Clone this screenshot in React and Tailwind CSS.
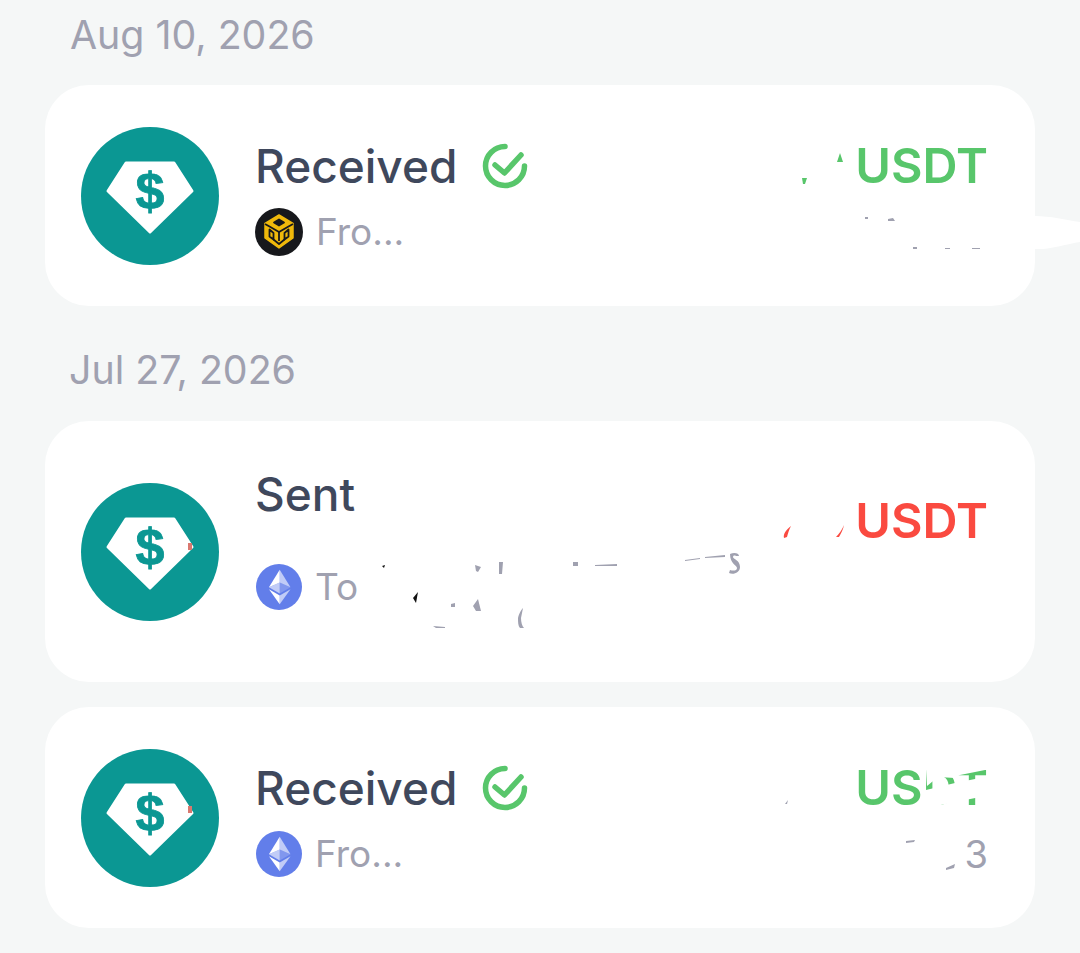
const Logo = () => (
  <svg width="138" height="138" viewBox="0 0 138 138" className="shrink-0">
    <circle cx="69" cy="69" r="69" fill="#0b9793" />
    <path d="M45 36H93L111 64L69 105L27 64Z" fill="#fff" stroke="#fff" strokeWidth="3" strokeLinejoin="round" />
    <text x="69" y="82" textAnchor="middle" fontFamily="'Liberation Sans', sans-serif" fontWeight="700" fontSize="52" stroke="#0b9793" strokeWidth="0.8" fill="#0b9793">$</text>
  </svg>
);

const Check = () => (
  <svg width="46" height="46" viewBox="0 0 46 46" className="shrink-0">
    <path d="M23 3.5A19.5 19.5 0 1 0 42.5 23" fill="none" stroke="#58c66b" strokeWidth="5.5" strokeLinecap="round" />
    <path d="M13 22L22.5 30L39 12" fill="none" stroke="#58c66b" strokeWidth="5.5" strokeLinecap="round" strokeLinejoin="round" />
  </svg>
);

const Bnb = () => (
  <svg width="48" height="48" viewBox="0 0 48 48" className="shrink-0">
    <circle cx="24" cy="24" r="24" fill="#17181c" />
    <path d="M24 7L38 15.5V30L24 40L10 30V15.5Z" fill="#f0b90b" stroke="#f0b90b" strokeWidth="1.5" strokeLinejoin="round" />
    <g fill="none" stroke="#17181c" strokeWidth="1.8" strokeLinejoin="round">
      <path d="M24 11.5L29 14.5L24 17.5L19 14.5Z" fill="#17181c" />
      <path d="M10 16L14.5 18.5L24 24L33.5 18.5L38 16" />
      <path d="M24 24V33" />
      <path d="M14.5 21.5V28.5L18.5 31.5V25Z" />
      <path d="M33.5 21.5V28.5L29.5 31.5V25Z" />
      <path d="M18.5 31.5L24 36L29.5 31.5" />
    </g>
  </svg>
);

const Eth = () => (
  <svg width="46" height="46" viewBox="0 0 32 32" className="ml-px shrink-0">
    <circle cx="16" cy="16" r="16" fill="#627eea" />
    <g fill="#fff">
      <path fillOpacity=".602" d="M16.498 4v8.87l7.497 3.35z" />
      <path d="M16.498 4L9 16.22l7.498-3.35z" />
      <path fillOpacity=".602" d="M16.498 21.968v6.027L24 17.616z" />
      <path d="M16.498 27.995v-6.028L9 17.616z" />
      <path fillOpacity=".2" d="M16.498 20.573l7.497-4.353-7.497-3.348z" />
      <path fillOpacity=".602" d="M9 16.22l7.498 4.353v-7.701z" />
    </g>
  </svg>
);

const Card = ({ title, check, icon, sub, color, end, tall }) => (
  <div className={`flex items-center rounded-[44px] bg-white pl-[36px] pr-[47px] ${tall ? "h-[261px]" : "h-[221px]"}`}>
    <Logo />
    <div className={`ml-[36px] flex flex-col ${tall ? "mt-[8px]" : ""}`}>
      <div className={`flex items-center gap-[25px] h-[50px] text-[46px] font-medium text-[#3f485c] ${tall ? "mb-[42px]" : "mb-[16px] mt-[7px]"}`}>
        <span>{title}</span>
        {check && <Check />}
      </div>
      <div className={`flex items-center gap-[13px] h-[50px] text-[37px] text-[#a0a1b0] ${tall ? "mb-[30px]" : ""}`}>
        {icon}
        <span>{sub}</span>
      </div>
    </div>
    <div className={`ml-auto flex flex-col items-end ${tall ? "mb-[-4px]" : "mt-[7px]"}`}>
      <div className="h-[50px] text-[48.5px] font-semibold leading-[50px]" style={{ color }}>USDT</div>
      <div className="mt-[16px] h-[50px] text-[38px] leading-[50px] text-[#a0a1b0]">{end}</div>
    </div>
  </div>
);

export default function App() {
  return (
    <div className="relative h-[953px] w-[1080px] overflow-hidden bg-[#f5f7f7] px-[45px] font-['Inter',sans-serif]">
      <div className="flex h-[85px] items-center pb-[15px] pl-[25px] text-[39.3px] text-[#a0a1b0]">Aug 10, 2026</div>
      <Card title="Received" check icon={<Bnb />} sub="Fro..." color="#58c66b" end={"\u00a0"} />
      <div className="flex h-[115px] items-center pl-[24px] pt-[14px] text-[39.3px] text-[#a0a1b0]">Jul 27, 2026</div>
      <Card title="Sent" icon={<Eth />} sub="To" color="#fa4a40" end={"\u00a0"} tall />
      <div className="h-[25px]" />
      <Card title="Received" check icon={<Eth />} sub="Fro..." color="#58c66b" end="3" />
      <svg className="absolute left-0 top-0" width="1080" height="953" viewBox="0 0 1080 953">
        <path d="M1035 216C1050 216 1066 220 1080 222V242C1066 244 1050 250 1035 249Z" fill="#fff" />
        <path d="M925 752H990V769L960 775L955 778L938 777L927 786Z" fill="#fff" />
        <path d="M926 790L955 783L990 776V795L926 808Z" fill="#fff" />
        <path d="M802 178H807L805 184H803Z" fill="#58c66b" />
        <path d="M840 153L843 162H837Z" fill="#58c66b" />
        <path d="M791 526C786 530 783 534 784 538L787 537C788 533 789 530 791 526Z" fill="#fa4a40" />
        <path d="M844 525C842 530 839 534 836 537L839 537C841 533 843 530 844 525Z" fill="#fa4a40" />
        <path d="M188 543H192V550H188Z" fill="#d9786f" />
        <path d="M188 806H192V813H188Z" fill="#d9786f" />
        <g fill="#a0a1b0">
          <path d="M865 217H868V219H865ZM888 219L893 218L895 221H888ZM913 247H917V249H913ZM945 248H950V249H945ZM972 248H980V249H972Z" />
          <path d="M475 565L481 567L478 572L476 571ZM499 562H503L502 574H499ZM573 562H578V566H573ZM595 565L617 564V566L595 566ZM685 560L700 558V559L685 561ZM705 557L725 555V557L705 558Z" />
          <path d="M730 554C734 552 739 553 739 556L736 556C734 555 733 556 733 557C733 559 740 560 740 567C740 573 733 575 729 573L730 570C733 571 737 571 737 568C737 565 730 564 730 554Z" />
          <path d="M451 604L455 603L455 607L451 607ZM473 606L478 599L481 611L476 611ZM518 618C519 613 522 609 523 608L521 618C521 622 522 626 524 628L520 628C518 626 518 622 518 618Z" />
          <path d="M433 626L445 627L445 628L436 628Z" />
          <path d="M785 804L788 800L787 804Z" />
          <path d="M906 841L915 840L914 842L906 843ZM946 868L955 864L954 868L946 870Z" />
        </g>
        <path d="M382 566L385 565L384 568Z" fill="#111" />
        <path d="M413 598L418 592L416 603Z" fill="#111" />
      </svg>
    </div>
  );
}
